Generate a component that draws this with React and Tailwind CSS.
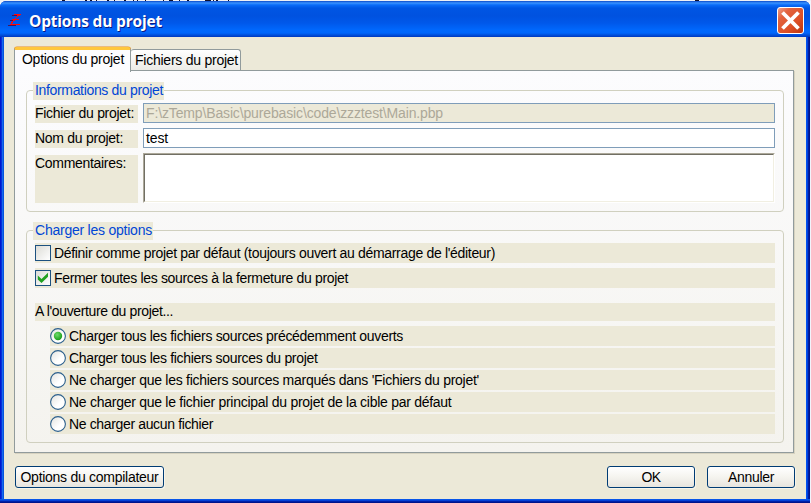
import { useLayoutEffect, useRef } from "react";

// Text run whose tracking is adjusted so that it spans exactly `w` pixels.
function Fit({ w, className = "", children }) {
  const ref = useRef(null);
  useLayoutEffect(() => {
    const el = ref.current;
    el.style.letterSpacing = "0px";
    const natural = el.getBoundingClientRect().width;
    el.style.letterSpacing = `${(w - natural) / el.textContent.length}px`;
  }, [w, children]);
  return (
    <span ref={ref} className={`inline-block shrink-0 whitespace-pre ${className}`}>
      {children}
    </span>
  );
}

function Legend({ w, className, children }) {
  return (
    <legend className={`ml-[6px] h-[17px] leading-[17px] text-[#0046d5] ${className}`}>
      <div className="h-[18px] bg-[#ece9d8] pl-[2px]">
        <Fit w={w}>{children}</Fit>
      </div>
    </legend>
  );
}

function Label({ w, className = "h-[18px]", children }) {
  return (
    <div className={`w-[103px] shrink-0 bg-[#ece9d8] leading-[17px] ${className}`}>
      <Fit w={w}>{children}</Fit>
    </div>
  );
}

function Check({ checked, w, children }) {
  return (
    <div className="flex h-5 items-center bg-[#ece9d8]">
      <span className="mr-[3px] flex h-4 w-4 shrink-0 items-center justify-center border border-[#1c5180] bg-linear-to-br from-[#dcdcd7] to-white">
        {checked && (
          <svg width="12" height="12" viewBox="0 0 12 12">
            <path d="M.8 3.500l3.700 3.600L11 .8v4L4.500 11 .8 7.500z" fill="#21a121" />
          </svg>
        )}
      </span>
      <Fit w={w} className="leading-5">{children}</Fit>
    </div>
  );
}

function Radio({ checked, w, children }) {
  return (
    <div className="flex h-5 items-center bg-[#ece9d8]">
      <svg className="mr-[3px] shrink-0" width="16" height="16" viewBox="0 0 16 16">
        <defs>
          <linearGradient id="well" x1="0" y1="0" x2="1" y2="1">
            <stop offset="0" stopColor="#e2e2dd" />
            <stop offset="0.6" stopColor="#fff" />
          </linearGradient>
          <radialGradient id="dot" cx="0.4" cy="0.35" r="0.65">
            <stop offset="0" stopColor="#6fdc6a" />
            <stop offset="1" stopColor="#1a9d19" />
          </radialGradient>
        </defs>
        <circle cx="8" cy="8" r="7.400" fill="url(#well)" stroke="#2b5f8c" strokeWidth="1.100" />
        {checked && <circle cx="8" cy="8" r="4.200" fill="url(#dot)" />}
      </svg>
      <Fit w={w} className="leading-5">{children}</Fit>
    </div>
  );
}

function Button({ w, className, children }) {
  return (
    <button
      className={`flex h-[22px] items-center justify-center rounded-[3px] border border-[#003c74] bg-linear-to-b from-white via-[#f5f4ef] to-[#e7e5de] shadow-[1px_1px_0_#f6f4ea] ${className}`}
    >
      <Fit w={w}>{children}</Fit>
    </button>
  );
}

const radios = [
  ["Charger tous les fichiers sources précédemment ouverts", 334],
  ["Charger tous les fichiers sources du projet", 248.5],
  ["Ne charger que les fichiers sources marqués dans 'Fichiers du projet'", 410],
  ["Ne charger que le fichier principal du projet de la cible par défaut", 382.5],
  ["Ne charger aucun fichier", 144],
];

export default function App() {
  return (
    <div className="flex h-[503px] w-[811px] flex-col overflow-hidden bg-[#f1f4fb] font-['Liberation_Sans',sans-serif] text-[14px] text-black">
      {/* sliver of the window behind */}
      <svg className="block shrink-0" width="811" height="1" shapeRendering="crispEdges">
        <rect width="811" height="1" fill="#eef0f4" />
        <path
          d="M62 .5h3M85 .5h2M90 .5h2M96 .5h1M107 .5h2M114 .5h1M124 .5h2M133 .5h1M137 .5h1M145 .5h1M163 .5h1M169 .5h4M179 .5h1M187 .5h2M205 .5h6M213 .5h1M216 .5h2M228 .5h1M695 .5h4"
          stroke="#10102a"
        />
      </svg>

      <div className="flex h-[502px] w-[810px] flex-col overflow-hidden rounded-t-[6px] bg-[#0036d0]">
        <div className="flex h-9 shrink-0 items-center bg-[linear-gradient(to_bottom,#0a49c8_0px,#3a93ff_2px,#0a6cf8_4px,#0056e4_7px,#0052e0_15px,#0058ea_22px,#0068fd_29px,#0066fb_32px,#0050dc_34px,#0038be_36px)] pl-2 pr-[6px]">
          <svg width="14" height="14" viewBox="0 0 14 14" className="mt-[2px] shrink-0" shapeRendering="crispEdges">
            <path d="M4 2.500h5M2 7.500h4M0 12.500h8" stroke="#47125a" />
            <path d="M6 1.500h7M9 2.500h3M9 3.500h1M8 4.500h1M7 5.500h1M4 6.500h7M5 7.500h2M4 8.500h1M3 9.500h2M3 10.500h1M2 11.500h10" stroke="#ff0a0a" />
          </svg>
          <Fit
            w={133}
            className="ml-[7px] mt-[4px] font-['Open_Sans',sans-serif] text-[15.500px] font-bold leading-5 text-white [text-shadow:1px_1px_0_#0a1883]"
          >
            Options du projet
          </Fit>
          <button className="ml-auto mt-[3px] h-[27px] w-[27px] rounded-[3px] border border-white bg-[linear-gradient(135deg,#f0a08a_0%,#e2633f_25%,#dd4f25_65%,#b93510_100%)]">
            <svg width="25" height="25" viewBox="0 0 25 25">
              <path d="M4.500 4.500l16 16M20.500 4.500l-16 16" stroke="#fff" strokeWidth="3.800" />
            </svg>
          </button>
        </div>

        <div className="flex min-h-0 flex-1 bg-[linear-gradient(to_right,#0019cf_0_1px,#0831d9_1px_2px,#166aee_2px_3px,#0855dd_3px_4px,#ece9d8_4px_806px,#0050ee_806px_807px,#0040dd_807px_808px,#001ea0_808px_809px,#00138c_809px)]">
          <div className="flex flex-1 flex-col pl-[14px] pr-[15px] pt-[10px]">
            <div className="z-10 flex h-6 items-end">
              <div className="-mb-px h-[25px] w-[117px] rounded-t-[3px] border-x border-t-[3px] border-x-[#919b9c] border-t-[#ffc73c] bg-[#fcfcfe] pl-[7px] leading-[18px] shadow-[inset_0_1px_0_#fcfcfe,0_-0.500px_0_#e68b2c]">
                <Fit w={102}>Options du projet</Fit>
              </div>
              <div className="mb-px h-[21px] w-[110px] rounded-t-[3px] border-r border-t border-[#919b9c] bg-linear-to-b from-white to-[#ecebe6] pl-1 leading-[21px]">
                <Fit w={103}>Fichiers du projet</Fit>
              </div>
            </div>

            <div className="-mt-px h-[383px] w-[780px] border border-[#919b9c] bg-linear-to-b from-[#fcfcfe] to-[#f4f3ee] pl-[11px] pt-[11px] shadow-[1px_1px_0_#d6d2c0]">
              <fieldset className="h-[130px] w-[758px] rounded-[4px] border border-[#d0d0bf]">
                <Legend w={128} className="w-[131px]">Informations du projet</Legend>
                <div className="ml-2 mt-[4px] flex flex-col gap-[5px]">
                  <div className="flex h-5 items-end gap-[5px]">
                    <Label w={99}>Fichier du projet:</Label>
                    <div className="h-5 w-[632px] border border-[#7f9db9] bg-[#ece9d8] pl-[2px] leading-[19px] text-[#aca899]">
                      <Fit w={297}>{"F:\\zTemp\\Basic\\purebasic\\code\\zzztest\\Main.pbp"}</Fit>
                    </div>
                  </div>
                  <div className="flex h-5 items-end gap-[5px]">
                    <Label w={88}>Nom du projet:</Label>
                    <div className="h-5 w-[632px] border border-[#7f9db9] bg-white pl-[2px] leading-[19px]">
                      <Fit w={22}>test</Fit>
                    </div>
                  </div>
                  <div className="flex h-[50px] items-end gap-[5px]">
                    <Label w={91} className="h-12">Commentaires:</Label>
                    <div className="h-[50px] w-[632px] border border-b-white border-l-[#aca899] border-r-white border-t-[#aca899]">
                      <div className="h-full border border-b-[#f1efe2] border-l-[#716f64] border-r-[#f1efe2] border-t-[#716f64] bg-white" />
                    </div>
                  </div>
                </div>
              </fieldset>

              <fieldset className="mt-[10px] h-[221px] w-[758px] rounded-[4px] border border-[#d0d0bf]">
                <Legend w={117} className="w-[120px]">Charger les options</Legend>
                <div className="ml-2 mt-[4px] w-[740px]">
                  <div className="flex flex-col gap-[5px]">
                    <Check w={441}>Définir comme projet par défaut (toujours ouvert au démarrage de l'éditeur)</Check>
                    <Check w={294} checked>Fermer toutes les sources à la fermeture du projet</Check>
                  </div>
                  <div className="mt-[15px] h-[18px] bg-[#ece9d8] leading-[17px]">
                    <Fit w={138}>A l'ouverture du projet...</Fit>
                  </div>
                  <div className="ml-[15px] mt-[5px] flex flex-col gap-[2px]">
                    {radios.map(([text, w], i) => (
                      <Radio key={text} w={w} checked={i === 0}>{text}</Radio>
                    ))}
                  </div>
                </div>
              </fieldset>
            </div>

            <div className="mt-[13px] flex pl-px">
              <Button w={138} className="w-[149px]">Options du compilateur</Button>
              <Button w={19} className="ml-auto w-[88px]">OK</Button>
              <Button w={46} className="ml-3 w-[88px]">Annuler</Button>
            </div>
          </div>
        </div>
        <div className="h-1 shrink-0 bg-[linear-gradient(to_bottom,#0855e8_0_1px,#0441d8_1px_2px,#0020a8_2px_3px,#00138c_3px)]" />
      </div>
    </div>
  );
}
